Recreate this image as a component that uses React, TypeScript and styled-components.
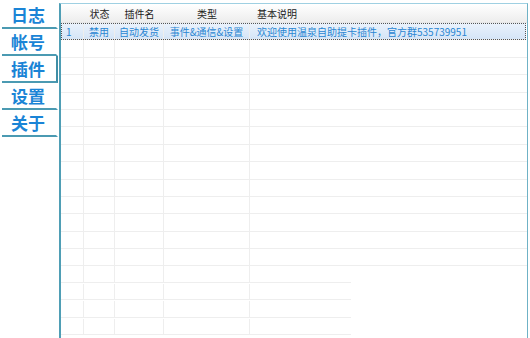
import React from 'react'
import styled, { createGlobalStyle } from 'styled-components'

const GlobalStyle = createGlobalStyle`
  html, body {
    margin: 0;
    padding: 0;
    background: #ffffff;
  }
  body {
    font-family: "Noto Sans CJK SC", "Noto Sans", sans-serif;
  }
`

const Window = styled.div`
  display: flex;
  width: 530px;
  height: 338px;
  overflow: hidden;
  background: #ffffff;
`

const Sidebar = styled.nav`
  display: flex;
  flex-direction: column;
  width: 56px;
  margin: 2px 1px 0 2px;
`

const Tab = styled.div<{ active?: boolean }>`
  box-sizing: border-box;
  height: 27px;
  display: flex;
  align-items: center;
  justify-content: center;
  border-bottom: 2px solid #4b9ab2;
  border-right: 2px solid ${props => (props.active ? '#3f8ea6' : 'transparent')};
  color: #1a84d6;
  font-family: "Noto Sans CJK SC", sans-serif;
  font-size: 17px;
  font-weight: 700;
  line-height: 1;
  padding-right: 2px;
`

const Panel = styled.section`
  flex: 1;
  margin-top: 3px;
  margin-right: 2px;
  border-left: 2px solid #4f9eb5;
  border-top: 1px solid #9fd0e2;
  border-right: 1px solid #6fb2c6;
  display: flex;
  flex-direction: column;
  overflow: hidden;
`

const HeaderRow = styled.div`
  display: grid;
  grid-template-columns: 23px 31px 49px 86px 1fr;
  height: 19px;
  background: linear-gradient(#ffffff, #ededed);
  border-bottom: 1px solid #e6e6e6;
  box-sizing: border-box;
`

const HeadCell = styled.div<{ left?: boolean }>`
  display: flex;
  align-items: center;
  justify-content: ${props => (props.left ? 'flex-start' : 'center')};
  padding-left: ${props => (props.left ? '7px' : '0')};
  font-size: 10px;
  color: #222;
  white-space: nowrap;
`

const Row = styled.div<{ short?: boolean; selected?: boolean }>`
  display: grid;
  grid-template-columns: 23px 31px 49px 86px 1fr;
  height: 17.4px;
  flex-shrink: 0;
  box-sizing: border-box;
  position: relative;
  border-bottom: 1px solid ${props => (props.short ? 'transparent' : '#eeeeee')};
  background: ${props =>
    props.selected
      ? 'linear-gradient(#eaf2fc, #d5e5f7)'
      : props.short
        ? 'linear-gradient(#eeeeee, #eeeeee) no-repeat left bottom / 290px 1px'
        : 'transparent'};
  outline: ${props => (props.selected ? '1px dotted #555' : 'none')};
  outline-offset: -1px;
  margin-right: ${props => (props.selected ? '1px' : '0')};
`

const Cell = styled.div<{ align?: 'left' | 'center' }>`
  display: flex;
  align-items: center;
  justify-content: ${props => (props.align === 'left' ? 'flex-start' : 'center')};
  padding-left: ${props => (props.align === 'left' ? '5px' : '0')};
  border-right: 1px solid #eeeeee;
  font-size: 10px;
  color: #2a86d2;
  white-space: nowrap;
  overflow: hidden;

  &:last-child {
    border-right: none;
    padding-left: 7px;
  }
`

const tabs = ['日志', '帐号', '插件', '设置', '关于']

const plugin = {
  index: '1',
  state: '禁用',
  name: '自动发货',
  kind: '事件&通信&设置',
  desc: '欢迎使用温泉自助提卡插件，官方群535739951'
}

const emptyRows = Array.from({ length: 17 }, (_, i) => i)

export default function App() {
  return (
    <>
      <GlobalStyle />
      <Window>
        <Sidebar>
          {tabs.map(t => (
            <Tab key={t} active={t === '插件'}>
              {t}
            </Tab>
          ))}
        </Sidebar>
        <Panel>
          <HeaderRow>
            <HeadCell />
            <HeadCell>状态</HeadCell>
            <HeadCell>插件名</HeadCell>
            <HeadCell>类型</HeadCell>
            <HeadCell left>基本说明</HeadCell>
          </HeaderRow>
          <Row selected>
            <Cell align="left">{plugin.index}</Cell>
            <Cell>{plugin.state}</Cell>
            <Cell>{plugin.name}</Cell>
            <Cell>{plugin.kind}</Cell>
            <Cell align="left">{plugin.desc}</Cell>
          </Row>
          {emptyRows.map(i => (
            <Row key={i} short={i >= 13}>
              <Cell />
              <Cell />
              <Cell />
              <Cell />
              <Cell />
            </Row>
          ))}
        </Panel>
      </Window>
    </>
  )
}
